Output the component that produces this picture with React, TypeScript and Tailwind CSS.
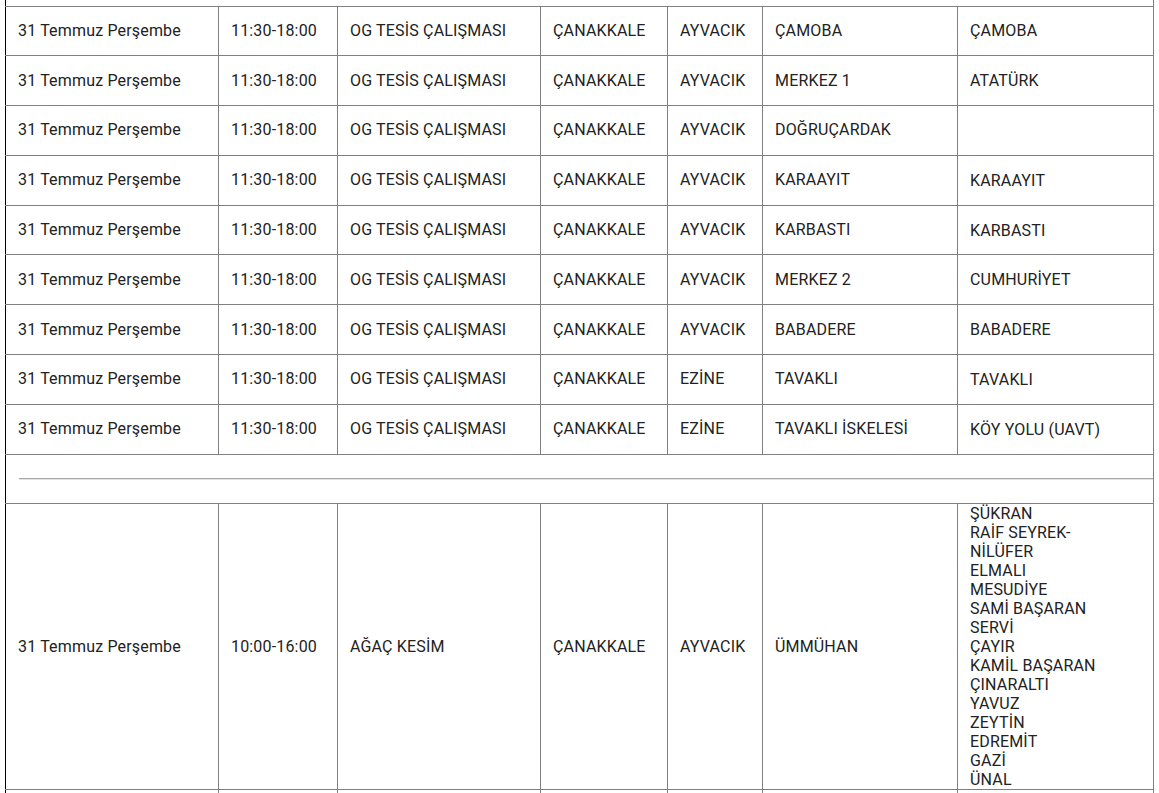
import React from 'react'

type Row = {
  date: string
  time: string
  work: string
  city: string
  district: string
  area: string
  streets: string[]
}

const base = {
  date: '31 Temmuz Perşembe',
  time: '11:30-18:00',
  work: 'OG TESİS ÇALIŞMASI',
  city: 'ÇANAKKALE',
}

const rows: Row[] = [
  { ...base, district: 'AYVACIK', area: 'ÇAMOBA', streets: ['ÇAMOBA'] },
  { ...base, district: 'AYVACIK', area: 'MERKEZ 1', streets: ['ATATÜRK'] },
  { ...base, district: 'AYVACIK', area: 'DOĞRUÇARDAK', streets: [] },
  { ...base, district: 'AYVACIK', area: 'KARAAYIT', streets: ['KARAAYIT'] },
  { ...base, district: 'AYVACIK', area: 'KARBASTI', streets: ['KARBASTI'] },
  { ...base, district: 'AYVACIK', area: 'MERKEZ 2', streets: ['CUMHURİYET'] },
  { ...base, district: 'AYVACIK', area: 'BABADERE', streets: ['BABADERE'] },
  { ...base, district: 'EZİNE', area: 'TAVAKLI', streets: ['TAVAKLI'] },
  { ...base, district: 'EZİNE', area: 'TAVAKLI İSKELESİ', streets: ['KÖY YOLU (UAVT)'] },
]

const treeCut: Row = {
  date: '31 Temmuz Perşembe',
  time: '10:00-16:00',
  work: 'AĞAÇ KESİM',
  city: 'ÇANAKKALE',
  district: 'AYVACIK',
  area: 'ÜMMÜHAN',
  streets: [
    'ŞÜKRAN',
    'RAİF SEYREK-',
    'NİLÜFER',
    'ELMALI',
    'MESUDİYE',
    'SAMİ BAŞARAN',
    'SERVİ',
    'ÇAYIR',
    'KAMİL BAŞARAN',
    'ÇINARALTI',
    'YAVUZ',
    'ZEYTİN',
    'EDREMİT',
    'GAZİ',
    'ÜNAL',
  ],
}

const cell = 'border border-[#808080] pl-3 pr-1 py-0 align-middle text-left font-normal'

function DataRow({ row, tall }: { row: Row; tall?: boolean }) {
  return (
    <tr className={tall ? '' : 'h-[49.8px]'}>
      <td className={`${cell} border-l-black`}>{row.date}</td>
      <td className={cell}>{row.time}</td>
      <td className={cell}>{row.work}</td>
      <td className={cell}>{row.city}</td>
      <td className={cell}>{row.district}</td>
      <td className={cell}>{row.area}</td>
      <td className={cell}>
        {row.streets.map((s, i) => (
          <div key={i} className="leading-[19px]">
            {s}
          </div>
        ))}
      </td>
    </tr>
  )
}

export default function App() {
  return (
    <div className="h-[793px] overflow-hidden bg-white pl-[5px] font-['Roboto',sans-serif] text-[16px] tracking-[0.17px] text-[#222]">
      <table className="w-[1148px] table-fixed border-collapse">
        <colgroup>
          <col className="w-[213px]" />
          <col className="w-[119px]" />
          <col className="w-[203px]" />
          <col className="w-[127px]" />
          <col className="w-[95px]" />
          <col className="w-[195px]" />
          <col className="w-[196px]" />
        </colgroup>
        <tbody>
          <tr className="h-[6px]">
            <td colSpan={7} className="border border-t-0 border-[#808080] border-l-black p-0" />
          </tr>
          {rows.map((r, i) => (
            <DataRow key={i} row={r} />
          ))}
          <tr className="h-[49.8px]">
            <td colSpan={7} className="border border-[#808080] border-l-black py-0 pl-[13px] pr-0 align-middle">
              <div className="border-t border-b border-t-[#a8a8a8] border-b-[#e4e4e4]" />
            </td>
          </tr>
          <DataRow row={treeCut} tall />
          <tr className="h-[49.8px]">
            <td className={`${cell} border-l-black`} />
            <td className={cell} />
            <td className={cell} />
            <td className={cell} />
            <td className={cell} />
            <td className={cell} />
            <td className={cell} />
          </tr>
        </tbody>
      </table>
    </div>
  )
}
